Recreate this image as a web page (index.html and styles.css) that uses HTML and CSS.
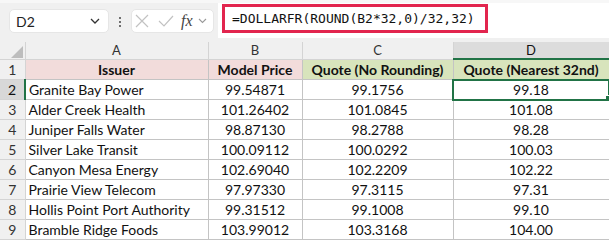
FILE: index.html
```html
<!DOCTYPE html>
<html>
<head>
<meta charset="utf-8">
<link rel="stylesheet" href="styles.css">
</head>
<body>
<div class="toolbar">
  <div class="namebox">
    <span class="cellref">D2</span>
    <svg class="chev" width="10" height="6" viewBox="0 0 10 6"><path d="M1 1 L5 5 L9 1" fill="none" stroke="#333" stroke-width="1.3"/></svg>
  </div>
  <div class="dots"><span></span><span></span><span></span></div>
  <div class="fxbox">
    <svg width="16" height="16" viewBox="0 0 16 16"><path d="M2 2 L14 14 M14 2 L2 14" stroke="#c2c2c2" stroke-width="1.2" fill="none"/></svg>
    <svg width="16" height="16" viewBox="0 0 16 16"><path d="M1 8 L6 13 L15 3" stroke="#c2c2c2" stroke-width="1.2" fill="none"/></svg>
    <span class="fx">fx</span>
    <svg width="9" height="6" viewBox="0 0 9 6"><path d="M1 1 L4.5 4.5 L8 1" fill="none" stroke="#9a9a9a" stroke-width="1.1"/></svg>
  </div>
  <div class="formula">
    <div class="formula-text">=DOLLARFR(ROUND(B2*32,0)/32,32)</div>
  </div>
</div>
<table class="sheet">
  <colgroup>
    <col class="c-rh"><col class="c-a"><col class="c-b"><col class="c-c"><col class="c-d">
  </colgroup>
  <tr class="colhead">
    <th class="corner"><span class="tri"></span></th><th>A</th><th>B</th><th>C</th><th class="sel-col">D</th>
  </tr>
  <tr>
    <th class="rh">1</th><td class="hd pink">Issuer</td><td class="hd pink">Model Price</td><td class="hd green">Quote (No Rounding)</td><td class="hd green">Quote (Nearest 32nd)</td>
  </tr>
  <tr>
    <th class="rh sel-row">2</th><td class="left">Granite Bay Power</td><td>99.54871</td><td>99.1756</td><td class="active">99.18<span class="handle"></span></td>
  </tr>
  <tr>
    <th class="rh">3</th><td class="left">Alder Creek Health</td><td>101.26402</td><td>101.0845</td><td>101.08</td>
  </tr>
  <tr>
    <th class="rh">4</th><td class="left">Juniper Falls Water</td><td>98.87130</td><td>98.2788</td><td>98.28</td>
  </tr>
  <tr>
    <th class="rh">5</th><td class="left">Silver Lake Transit</td><td>100.09112</td><td>100.0292</td><td>100.03</td>
  </tr>
  <tr>
    <th class="rh">6</th><td class="left">Canyon Mesa Energy</td><td>102.69040</td><td>102.2209</td><td>102.22</td>
  </tr>
  <tr>
    <th class="rh">7</th><td class="left">Prairie View Telecom</td><td>97.97330</td><td>97.3115</td><td>97.31</td>
  </tr>
  <tr>
    <th class="rh">8</th><td class="left">Hollis Point Port Authority</td><td>99.31512</td><td>99.1008</td><td>99.10</td>
  </tr>
  <tr>
    <th class="rh">9</th><td class="left">Bramble Ridge Foods</td><td>103.99012</td><td>103.3168</td><td>104.00</td>
  </tr>
</table>
</body>
</html>
```

FILE: styles.css
```css
html, body {
  margin: 0;
  padding: 0;
  background: #ffffff;
}
body {
  font-family: Lato, "Open Sans", sans-serif;
  width: 609px;
  height: 242px;
  overflow: hidden;
}
.toolbar {
  height: 42px;
  background: #f0f0f0;
  border-top: 3px solid #f7f7f7;
  box-sizing: border-box;
  display: flex;
  align-items: flex-start;
  padding-left: 9px;
  position: relative;
}
.namebox {
  margin-top: 6px;
  width: 100px;
  height: 24px;
  background: #fff;
  border-radius: 5px;
  box-sizing: border-box;
  border: 1px solid #e6e6e6;
  display: flex;
  align-items: center;
  justify-content: space-between;
  padding: 0 8px 0 6px;
}
.cellref {
  font-size: 14px;
  color: #222;
}
.dots {
  width: 22px;
  margin-top: 14px;
  display: flex;
  flex-direction: column;
  align-items: center;
  gap: 2px;
}
.dots span {
  width: 2px;
  height: 2px;
  background: #444;
  border-radius: 1px;
}
.fxbox {
  margin-top: 6px;
  width: 83px;
  height: 24px;
  background: #fff;
  border-radius: 5px;
  border: 1px solid #e6e6e6;
  box-sizing: border-box;
  display: flex;
  align-items: center;
  padding-left: 2px;
  gap: 8px;
}
.fxbox svg:nth-child(3), .fxbox svg:last-child {
  margin-left: -3px;
}
.fx {
  font-family: "Liberation Serif", serif;
  font-style: italic;
  font-size: 16px;
  color: #444;
  margin-left: -1px;
}
.formula {
  position: absolute;
  left: 218px;
  right: 0;
  top: 0;
  height: 35px;
  background: #fff;
}
.formula-text {
  position: absolute;
  left: 4px;
  top: 1px;
  width: 266px;
  height: 29px;
  box-sizing: border-box;
  border: 3px solid #e2254e;
  font-family: "DejaVu Sans Mono", "Liberation Mono", monospace;
  font-size: 13px;
  line-height: 23px;
  padding-left: 7px;
  color: #111;
}
.sheet {
  border-collapse: collapse;
  table-layout: fixed;
  width: 609px;
}
.c-rh { width: 25px; }
.c-a { width: 183px; }
.c-b { width: 94px; }
.c-c { width: 151px; }
.c-d { width: 156px; }
.sheet th, .sheet td {
  padding: 0;
  border: 1px solid #c4c4c4;
  font-size: 14px;
  color: #111;
  white-space: nowrap;
  overflow: hidden;
}
.colhead th {
  height: 16px;
  background: #f0f0f0;
  font-weight: normal;
  font-size: 13px;
  color: #333;
  line-height: 16px;
  border-color: #d4d4d4;
  border-top: none;
}
.colhead th.corner {
  position: relative;
  border-left: none;
}
.tri {
  position: absolute;
  right: 2px;
  bottom: 1px;
  width: 0;
  height: 0;
  border-left: 12px solid transparent;
  border-bottom: 12px solid #bdbdbd;
}
.colhead th.sel-col {
  background: #dcdcdc;
  border-bottom: 2px solid #217346;
  color: #111;
}
.sheet td {
  height: 19px;
  line-height: 19px;
  text-align: center;
}
.sheet td.left {
  text-align: left;
  padding-left: 3px;
}
th.rh {
  background: #f0f0f0;
  font-weight: normal;
  font-size: 14px;
  color: #333;
  border-color: #d4d4d4;
  border-left: none;
  text-align: center;
}
th.rh.sel-row {
  background: #d8d8d8;
  border-right: 2px solid #217346;
  color: #111;
}
td.hd {
  font-weight: bold;
  color: #111;
}
td.pink { background: #f2dcdb; }
td.green { background: #d8e4bc; }
td.active {
  position: relative;
  outline: 2px solid #217346;
  outline-offset: -1px;
}
.handle {
  position: absolute;
  right: -3px;
  bottom: -3px;
  width: 5px;
  height: 5px;
  background: #217346;
  border: 1px solid #fff;
}
```
